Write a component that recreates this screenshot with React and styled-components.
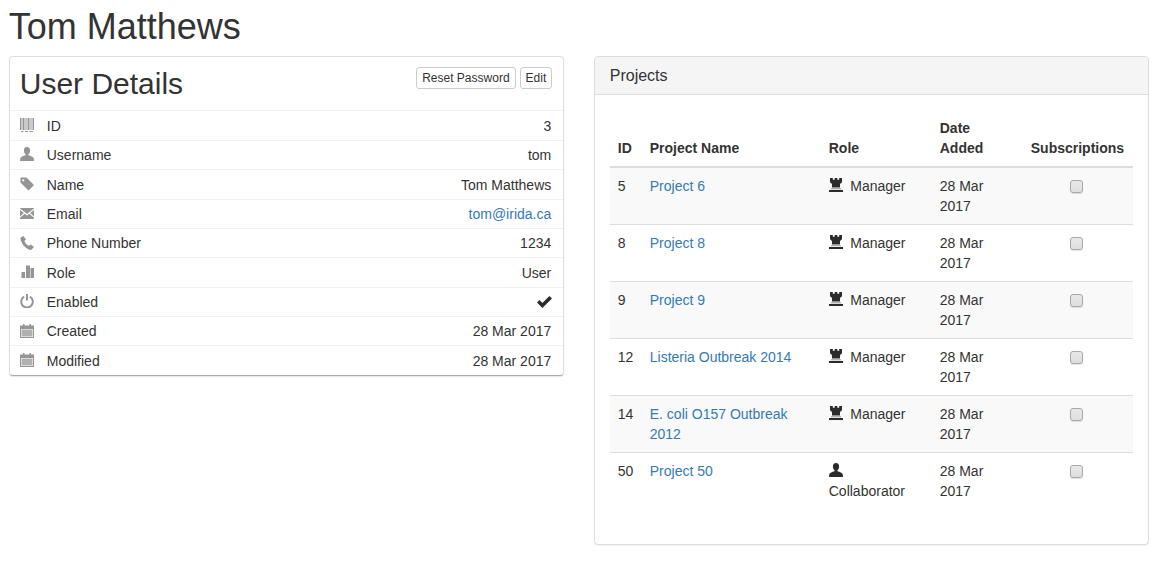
import React from 'react';
import styled, { createGlobalStyle } from 'styled-components';

const GlobalStyle = createGlobalStyle`
  body {
    margin: 0;
    font-family: "Liberation Sans", Arial, sans-serif;
    font-size: 14px;
    line-height: 20px;
    color: #333;
    background: #fff;
  }
`;

const Page = styled.div`
  padding: 0 14px 20px 8.75px;
`;

const PageTitle = styled.h1`
  margin: 0;
  padding-top: 7px;
  height: 56px;
  box-sizing: border-box;
  font-size: 36px;
  line-height: 40px;
  font-weight: 500;
`;

const Columns = styled.div`
  display: grid;
  grid-template-columns: 555px 555px;
  column-gap: 30px;
  align-items: start;
`;

const DetailsCard = styled.section`
  border: 1px solid #ddd;
  border-bottom-color: #aaa;
  border-radius: 4px;
  box-shadow: 0 1px 1px rgba(0, 0, 0, 0.1);
  background: #fff;
`;

const DetailsHeader = styled.header`
  display: flex;
  justify-content: space-between;
  align-items: flex-start;
  height: 53.45px;
  padding: 10px 10.5px 0 10px;
  box-sizing: border-box;
`;

const DetailsTitle = styled.h2`
  margin: 0;
  font-size: 30px;
  line-height: 33px;
  font-weight: 500;
`;

const ButtonRow = styled.div`
  display: flex;
  gap: 4px;
`;

const SmallButton = styled.button`
  height: 22px;
  padding: 1px 5px;
  box-sizing: border-box;
  border: 1px solid #ccc;
  border-radius: 3px;
  background: #fff;
  color: #333;
  font-family: inherit;
  font-size: 12px;
  line-height: 18px;
`;

const DetailRow = styled.div`
  display: flex;
  align-items: center;
  height: 29.36px;
  box-sizing: border-box;
  padding: 0.4px 11.5px 0 10px;
  border-top: 1px solid #f1f1f1;
`;

const RowIcon = styled.span`
  display: flex;
  width: 27px;
  margin-top: -1.4px;
  color: #959595;
`;

const RowLabel = styled.span`
  flex: 1;
`;

const Link = styled.a`
  color: #337ab7;
  text-decoration: none;
`;

const ProjectsCard = styled.section`
  border: 1px solid #ddd;
  border-radius: 4px;
  box-shadow: 0 1px 1px rgba(0, 0, 0, 0.05);
  background: #fff;
  overflow: hidden;
`;

const ProjectsHeading = styled.header`
  height: 38px;
  padding: 10px 15px;
  box-sizing: border-box;
  background: #f5f5f5;
  border-bottom: 1px solid #ddd;
  font-size: 16px;
  line-height: 18px;
`;

const ProjectsBody = styled.div`
  padding: 15px;
`;

const Table = styled.table`
  width: 523px;
  margin-bottom: 20px;
  table-layout: fixed;
  border-collapse: collapse;
  border-spacing: 0;
`;

const HeadCell = styled.th`
  padding: 8px;
  text-align: left;
  vertical-align: bottom;
  font-weight: 700;
  border-bottom: 2px solid #ddd;
`;

const BodyRow = styled.tr`
  background: ${(p) => (p.$striped ? '#f9f9f9' : '#fff')};
`;

const Cell = styled.td`
  padding: 8px;
  vertical-align: top;
  border-bottom: ${(p) => (p.$last ? '0' : '1px solid #ddd')};
  text-align: ${(p) => (p.$center ? 'center' : 'left')};
`;

const RoleIcon = styled.span`
  display: inline-block;
  width: 14px;
  height: 14px;
  margin-right: 7.5px;
  vertical-align: -1px;
  color: #2b2b2b;
`;

const SubscribeBox = styled.input`
  appearance: none;
  display: inline-block;
  margin: 4px 2px 0 0;
  width: 13px;
  height: 13px;
  box-sizing: border-box;
  border: 1px solid #a9a9a9;
  border-radius: 3px;
  background: linear-gradient(#e8e8e8, #dedede);
  box-shadow: 0 1px 1px rgba(0, 0, 0, 0.12);
`;

const CheckMark = styled.svg`
  display: block;
  margin-right: -0.5px;
`;

const Glyph = ({ children, fill = 'currentColor' }) => (
  <svg width="14" height="14" viewBox="0 0 14 14" fill={fill} style={{ display: 'block' }}>
    {children}
  </svg>
);

const Barcode = () => (
  <Glyph>
    <path d="M0 0h1.500v12H0zM2.500 0h2v12h-2zM5.500 0h1v12h-1zM7.500 0h2v12h-2zM10.500 0h1v12h-1zM12.500 0H14v12h-1.500zM1 13h2.500v1H1zM5 13h3v1H5zM9.500 13H13v1H9.500z" />
  </Glyph>
);

const UserGlyph = () => (
  <Glyph>
    <path d="M7 0C5 0 3.900 1.400 3.900 3.400c0 1.600.6 3 1.600 3.800v1.100C3.400 9 .6 9.700.3 11.200L0 14h14l-.3-2.800c-.3-1.500-3.100-2.200-5.200-2.900V7.200c1-.8 1.600-2.200 1.600-3.800C10.100 1.400 9 0 7 0z" />
  </Glyph>
);

const Tag = () => (
  <Glyph>
    <path d="M.5 0.500H6.500L14 8l-5.500 5.500-8-8zM3.300 2.200a1.100 1.100 0 1 0 0 2.200 1.100 1.100 0 0 0 0-2.200z" fillRule="evenodd" />
  </Glyph>
);

const Envelope = () => (
  <Glyph>
    <path d="M0 2h14v.6L7 8 0 2.600zM0 4l3.900 3L0 10.500zM14 4l-3.900 3L14 10.500zM4.800 7.700L7 9.400l2.200-1.700 4.800 4.100V13H0v-1.200z" />
  </Glyph>
);

const Phone = () => (
  <Glyph>
    <path d="M3.500 0L1 1.300C.3 1.800.3 3.200.9 4.800c1.400 4 4.300 7.200 7.700 8.700 1.500.6 2.800.6 3.300-.2L14 11l-3.300-2.600-1.900 1.400C6.800 8.900 5.100 6.900 4.400 5L6 3.500z" />
  </Glyph>
);

const Stats = () => (
  <Glyph>
    <path d="M1.500 7H5v6H1.500zM6 .5h4V13H6zM10.500 3H14v10h-3.500z" />
  </Glyph>
);

const Power = () => (
  <Glyph fill="none">
    <path d="M4.200 2.600A5.800 5.800 0 1 0 9.800 2.600" stroke="currentColor" strokeWidth="2" />
    <path d="M7 0v6.500" stroke="currentColor" strokeWidth="2" />
  </Glyph>
);

const Calendar = () => (
  <Glyph>
    <path fillRule="evenodd" d="M3 0h1.500v1.500h5V0H11v1.500h3V14H0V1.500h3zM1 5v8h12V5z" />
    <path d="M1.500 5.500h11v7h-11z" opacity="0.75" />
  </Glyph>
);

const Check = () => (
  <CheckMark width="15" height="12" viewBox="0 0 15 12" fill="#2b2b2b">
    <path d="M0 6.500L2.500 4 5.400 6.900 12.400 0 15 2.600 5.400 12z" />
  </CheckMark>
);

const Tower = () => (
  <Glyph>
    <path d="M1 0h2.800v1.800h1.900V0h2.600v1.800h1.900V0H13v4.300l-2 1.700v3.600H3V6L1 4.300z" />
    <path d="M2 10.300h10v1H2z" opacity="0.5" />
    <path d="M0 12h14v2H0z" />
  </Glyph>
);

const details = [
  { icon: <Barcode />, label: 'ID', value: '3' },
  { icon: <UserGlyph />, label: 'Username', value: 'tom' },
  { icon: <Tag />, label: 'Name', value: 'Tom Matthews' },
  { icon: <Envelope />, label: 'Email', value: <Link href="#">tom@irida.ca</Link> },
  { icon: <Phone />, label: 'Phone Number', value: '1234' },
  { icon: <Stats />, label: 'Role', value: 'User' },
  { icon: <Power />, label: 'Enabled', value: <Check /> },
  { icon: <Calendar />, label: 'Created', value: '28 Mar 2017' },
  { icon: <Calendar />, label: 'Modified', value: '28 Mar 2017' },
];

const projects = [
  { id: 5, name: 'Project 6', role: 'Manager' },
  { id: 8, name: 'Project 8', role: 'Manager' },
  { id: 9, name: 'Project 9', role: 'Manager' },
  { id: 12, name: 'Listeria Outbreak 2014', role: 'Manager' },
  { id: 14, name: 'E. coli O157 Outbreak 2012', role: 'Manager' },
  { id: 50, name: 'Project 50', role: 'Collaborator' },
];

export default function App() {
  return (
    <Page>
      <GlobalStyle />
      <PageTitle>Tom Matthews</PageTitle>
      <Columns>
        <DetailsCard>
          <DetailsHeader>
            <DetailsTitle>User Details</DetailsTitle>
            <ButtonRow>
              <SmallButton>Reset Password</SmallButton>
              <SmallButton>Edit</SmallButton>
            </ButtonRow>
          </DetailsHeader>
          {details.map((d) => (
            <DetailRow key={d.label}>
              <RowIcon>{d.icon}</RowIcon>
              <RowLabel>{d.label}</RowLabel>
              {d.value}
            </DetailRow>
          ))}
        </DetailsCard>

        <ProjectsCard>
          <ProjectsHeading>Projects</ProjectsHeading>
          <ProjectsBody>
            <Table>
              <colgroup>
                <col width="32" />
                <col width="179" />
                <col width="111" />
                <col width="91" />
                <col width="110" />
              </colgroup>
              <thead>
                <tr>
                  <HeadCell>ID</HeadCell>
                  <HeadCell>Project Name</HeadCell>
                  <HeadCell>Role</HeadCell>
                  <HeadCell>Date Added</HeadCell>
                  <HeadCell>Subscriptions</HeadCell>
                </tr>
              </thead>
              <tbody>
                {projects.map((p, i) => {
                  const last = i === projects.length - 1;
                  return (
                    <BodyRow key={p.id} $striped={i % 2 === 0}>
                      <Cell $last={last}>{p.id}</Cell>
                      <Cell $last={last}>
                        <Link href="#">{p.name}</Link>
                      </Cell>
                      <Cell $last={last}>
                        <RoleIcon>{p.role === 'Manager' ? <Tower /> : <UserGlyph />}</RoleIcon>
                        {p.role}
                      </Cell>
                      <Cell $last={last}>28 Mar 2017</Cell>
                      <Cell $last={last} $center>
                        <SubscribeBox type="checkbox" readOnly />
                      </Cell>
                    </BodyRow>
                  );
                })}
              </tbody>
            </Table>
          </ProjectsBody>
        </ProjectsCard>
      </Columns>
    </Page>
  );
}
